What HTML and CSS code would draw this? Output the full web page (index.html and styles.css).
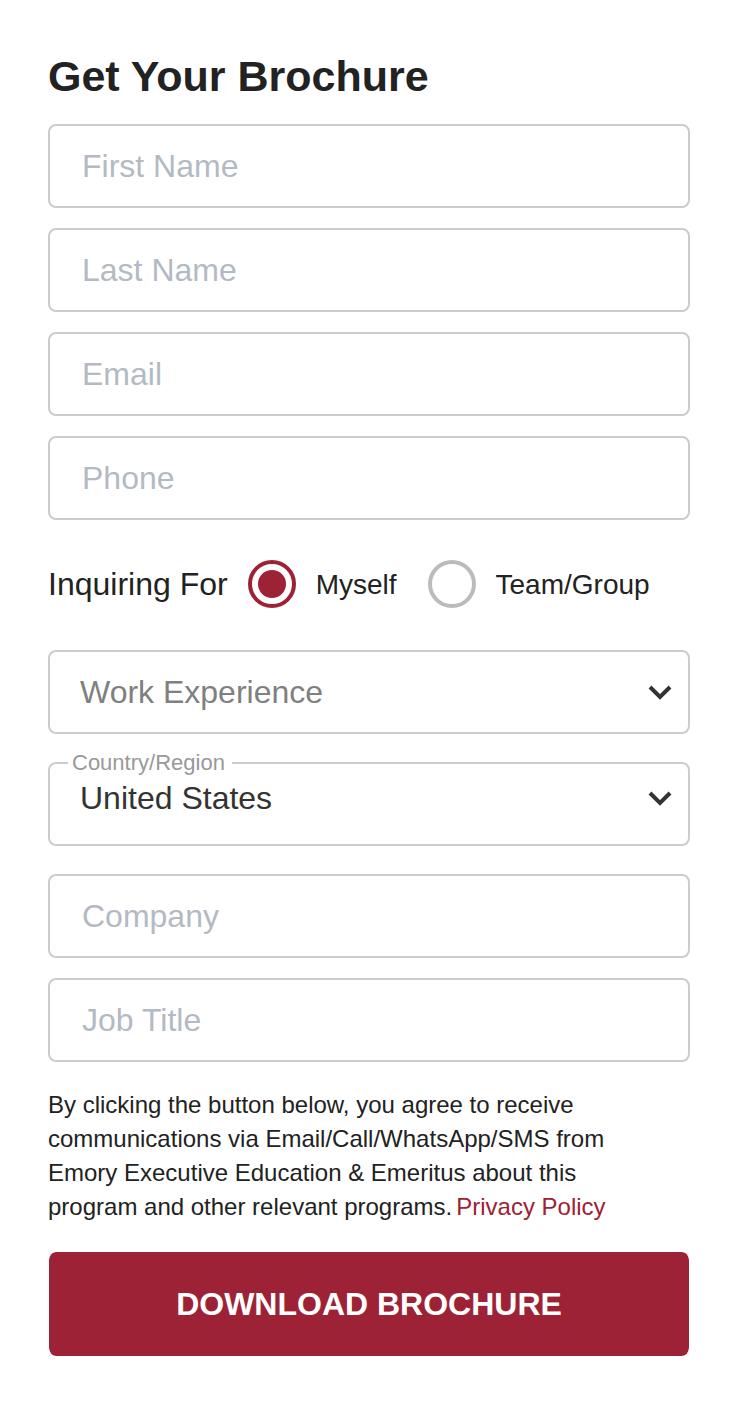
FILE: index.html
```html
<!DOCTYPE html>
<html lang="en">
<head>
<meta charset="utf-8">
<meta name="viewport" content="width=device-width, initial-scale=1">
<title>Get Your Brochure</title>
<link rel="stylesheet" href="styles.css">
</head>
<body>
<main class="page">
  <form class="form">
    <h1 class="title">Get Your Brochure</h1>
    <div class="fields">
      <input class="control" type="text" placeholder="First Name" aria-label="First Name">
      <input class="control" type="text" placeholder="Last Name" aria-label="Last Name">
      <input class="control" type="email" placeholder="Email" aria-label="Email">
      <input class="control" type="tel" placeholder="Phone" aria-label="Phone">
    </div>
    <div class="inquiry" role="radiogroup" aria-labelledby="inquiry-label">
      <span class="inquiry-label" id="inquiry-label">Inquiring For</span>
      <div class="choices">
        <label class="choice"><input class="radio" type="radio" name="inquiry" checked><span class="choice-text">Myself</span></label>
        <label class="choice"><input class="radio" type="radio" name="inquiry"><span class="choice-text">Team/Group</span></label>
      </div>
    </div>
    <div class="selects">
      <div class="select-field">
        <select class="control select select-empty" aria-label="Work Experience">
          <option>Work Experience</option>
        </select>
        <svg class="chevron" viewBox="0 0 24 16" aria-hidden="true"><path d="M2 3 12 13 22 3"/></svg>
      </div>
      <div class="select-field select-labelled">
        <label class="float-label" for="country">Country/Region</label>
        <select class="control select" id="country">
          <option>United States</option>
        </select>
        <svg class="chevron" viewBox="0 0 24 16" aria-hidden="true"><path d="M2 3 12 13 22 3"/></svg>
      </div>
    </div>
    <div class="fields">
      <input class="control" type="text" placeholder="Company" aria-label="Company">
      <input class="control" type="text" placeholder="Job Title" aria-label="Job Title">
    </div>
    <p class="terms">By clicking the button below, you agree to receive communications via Email/Call/WhatsApp/SMS from Emory Executive Education &amp; Emeritus about this program and other relevant programs.<a class="policy" href="#privacy">Privacy Policy</a></p>
    <button class="submit" type="submit">DOWNLOAD BROCHURE</button>
  </form>
</main>
</body>
</html>
```
FILE: styles.css
```css
* {
  box-sizing: border-box;
}

body {
  margin: 0;
  background: #fff;
  color: #222;
  font-family: "Liberation Sans", Arial, sans-serif;
}

.page {
  padding: 48px;
}

.title {
  margin: 0 0 20px;
  font-size: 43px;
  line-height: 56px;
}

.fields {
  display: grid;
  gap: 20px;
}

.control {
  display: block;
  width: 100%;
  height: 84px;
  padding: 0 32px;
  border: 2px solid #ccc;
  border-radius: 8px;
  background: #fff;
  color: #333;
  font-family: inherit;
  font-size: 32px;
}

.control::placeholder {
  color: #b3bac3;
  opacity: 1;
}

.inquiry {
  display: flex;
  align-items: center;
  gap: 20px;
  margin: 40px 0 42px;
}

.inquiry-label {
  font-size: 32px;
}

.choices {
  display: flex;
  gap: 31px;
}

.choice {
  display: flex;
  align-items: center;
  gap: 20px;
  font-size: 28px;
}

.choice-text {
  padding-top: 2px;
}

.radio {
  appearance: none;
  width: 48px;
  height: 48px;
  margin: 0;
  padding: 6px;
  border: 4px solid #bbb;
  border-radius: 50%;
}

.radio:checked {
  border-color: #9d2235;
  background: #9d2235 content-box;
}

.selects {
  display: grid;
  gap: 28px;
  margin-bottom: 28px;
}

.select-field {
  position: relative;
}

.select {
  appearance: none;
  padding: 0 48px 0 30px;
}

.select-empty {
  color: #808080;
}

.chevron {
  position: absolute;
  top: 34px;
  right: 18px;
  width: 24px;
  height: 16px;
  fill: none;
  stroke: #333;
  stroke-width: 4;
  pointer-events: none;
}

.select-labelled .select {
  padding-bottom: 12px;
}

.select-labelled .chevron {
  top: 28px;
}

.float-label {
  position: absolute;
  top: -13px;
  left: 20px;
  padding: 1px 7px 0 4px;
  background: #fff;
  color: #999;
  font-size: 22px;
  line-height: 26px;
}

.terms {
  margin: 26px 0 28px;
  padding-right: 40px;
  font-size: 24px;
  line-height: 34px;
}

.policy {
  display: inline-block;
  margin-left: 4px;
  color: #9d2235;
  text-decoration: none;
}

.submit {
  display: block;
  width: 100%;
  padding: 34px 16px;
  border: 1px solid #fff;
  border-width: 0 1px;
  border-radius: 8px;
  background: #9d2235 padding-box;
  color: #fff;
  font-family: inherit;
  font-size: 32px;
  font-weight: 700;
  line-height: 36px;
}
```
